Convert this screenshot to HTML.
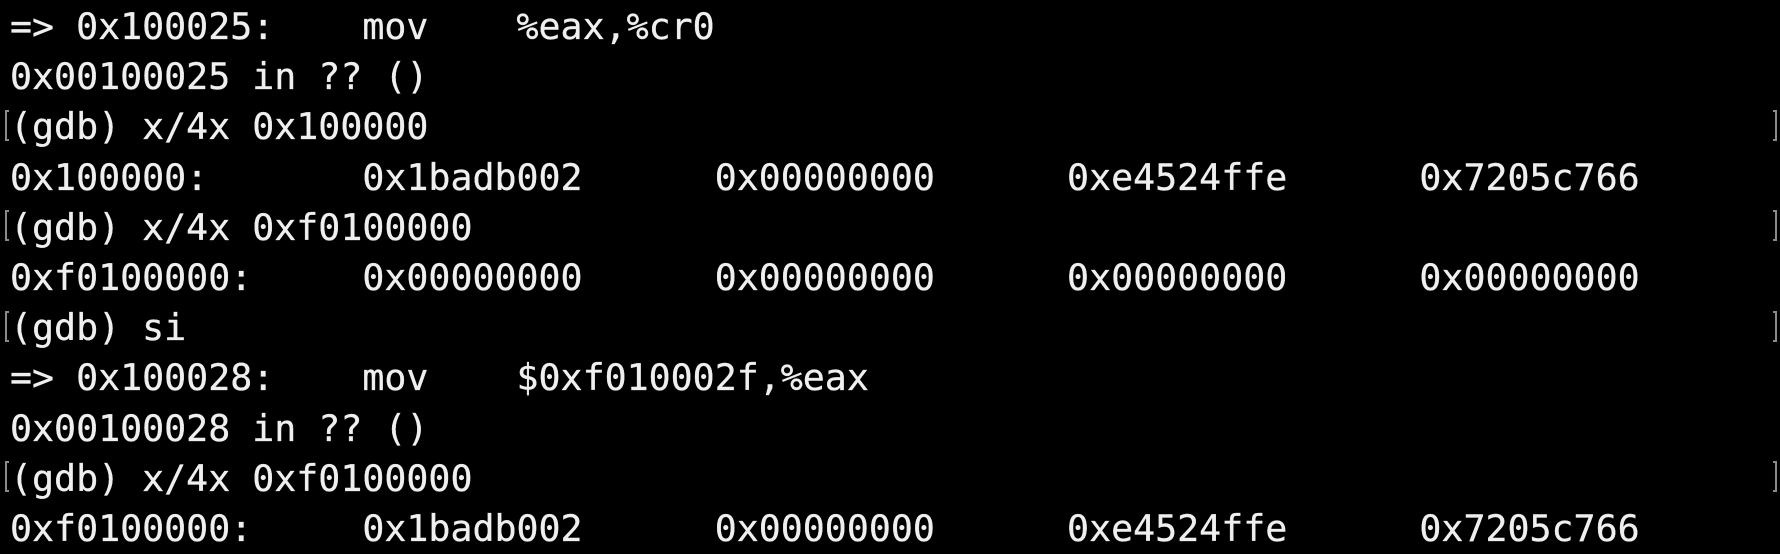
<!DOCTYPE html>
<html><head><style>
html,body{margin:0;padding:0;background:#000;width:1780px;height:552px;overflow:hidden}
pre{margin:0;position:absolute;left:10px;top:2px;font-family:"DejaVu Sans Mono","Liberation Mono",monospace;font-size:36.6px;line-height:50.2px;color:#efefef;white-space:pre;-webkit-text-stroke:0.3px #efefef}
.b{position:absolute;width:4px;height:31px;border:2px solid #8a8a8a;box-sizing:border-box}
.l{left:5px;border-right:none}
.r{left:1773px;border-left:none}
</style></head><body>
<pre>=&gt; 0x100025:    mov    %eax,%cr0
0x00100025 in ?? ()
(gdb) x/4x 0x100000
0x100000:       0x1badb002      0x00000000      0xe4524ffe      0x7205c766
(gdb) x/4x 0xf0100000
0xf0100000:     0x00000000      0x00000000      0x00000000      0x00000000
(gdb) si
=&gt; 0x100028:    mov    $0xf010002f,%eax
0x00100028 in ?? ()
(gdb) x/4x 0xf0100000
0xf0100000:     0x1badb002      0x00000000      0xe4524ffe      0x7205c766</pre>
<div class="b l" style="top:110px"></div><div class="b r" style="top:110px"></div>
<div class="b l" style="top:210px"></div><div class="b r" style="top:210px"></div>
<div class="b l" style="top:311px"></div><div class="b r" style="top:311px"></div>
<div class="b l" style="top:461px"></div><div class="b r" style="top:461px"></div>
</body></html>
